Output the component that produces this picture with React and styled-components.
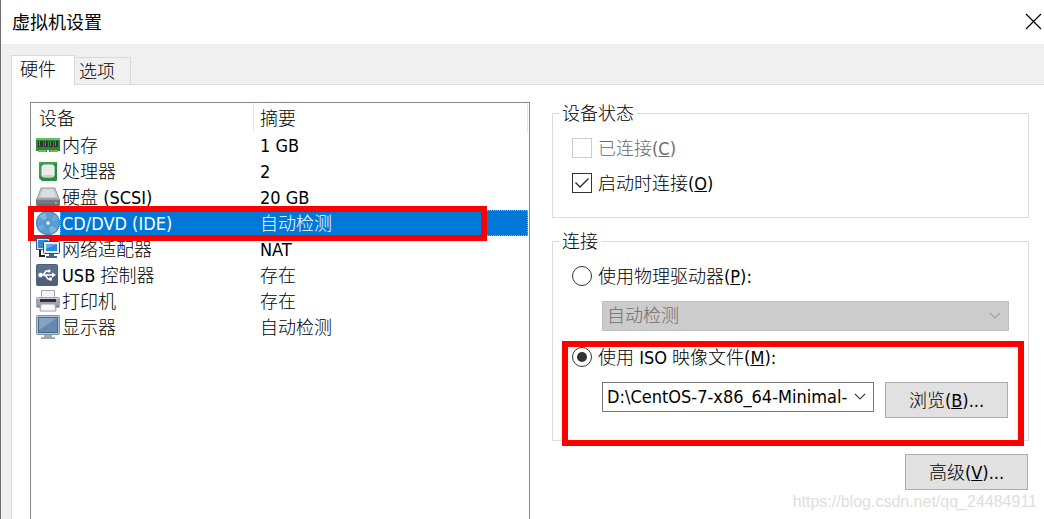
import React from "react";
import styled, { createGlobalStyle, css } from "styled-components";

const Global = createGlobalStyle`
  *, *::before, *::after { box-sizing: border-box; }
  body { margin: 0; background: #fff; }
  body, button, input, select {
    font-family: "DejaVu Sans Condensed", "Noto Sans CJK SC", sans-serif;
    font-size: 18px;
    font-weight: 300;
    line-height: 24px;
    color: #000;
  }
`;

const Dialog = styled.div`
  position: relative;
  display: flex;
  flex-direction: column;
  min-height: 100vh;
  background: #f0f0f0;
  border-left: 1px solid #6e6e72;
  overflow: hidden;
`;

const TitleBar = styled.header`
  display: flex;
  align-items: center;
  justify-content: space-between;
  height: 44px;
  padding: 0 2px 2px 11px;
  background: #fff;
`;

const Title = styled.h1`
  margin: 0;
  font: 400 18px/24px "Noto Sans CJK SC", sans-serif;
`;

const CloseButton = styled.button`
  display: flex;
  padding: 0;
  border: 0;
  background: none;
`;

const Body = styled.main`
  flex: 1;
  display: flex;
  flex-direction: column;
  padding: 11px 0 0 10px;
`;

const Tabs = styled.div`
  display: flex;
  align-items: flex-end;
`;

const Tab = styled.button`
  height: ${(p) => (p.$active ? 30 : 28)}px;
  width: ${(p) => (p.$active ? 64 : 56)}px;
  padding: 0 0 ${(p) => (p.$active ? 2 : 0)}px ${(p) => (p.$active ? 8 : 4)}px;
  text-align: left;
  border: 1px solid #d9d9d9;
  border-bottom: 0;
  background: ${(p) => (p.$active ? "#fff" : "#f0f0f0")};
  ${(p) => (p.$active ? "z-index: 1;" : "border-left: 0;")}
`;

const Panel = styled.section`
  flex: 1;
  display: grid;
  grid-template-columns: 500fr 477fr;
  gap: 22px;
  margin-top: -1px;
  padding: 17px 15px 0 18px;
  border: 1px solid #d9d9d9;
  border-width: 1px 0 0 1px;
  background: #fff;
`;

const ListBox = styled.div`
  padding-right: 1px;
  border: 1px solid #828790;
  border-bottom: 0;
`;

const DeviceTable = styled.table`
  width: 100%;
  table-layout: fixed;
  border-collapse: separate;
  border-spacing: 0;
`;

const HeadCell = styled.th`
  width: ${(p) => p.$width || "auto"};
  height: 29px;
  padding: 2px 0 0 ${(p) => (p.$width ? 8 : 6)}px;
  border-right: 1px solid #e5e5e5;
  text-align: left;
  font-weight: 300;
`;

const Row = styled.tr`
  position: relative;
  ${(p) =>
    p.$selected &&
    css`
      color: #fff;
      background: linear-gradient(to right, #fff 29px, #0078d7 29px);
    `}
`;

const Cell = styled.td`
  height: 26px;
  padding: ${(p) => (p.$name ? "0 0 0 5px" : "2px 0 0 6px")};
  white-space: nowrap;
`;

const Device = styled.div`
  display: flex;
  align-items: center;
  gap: 2px;
  height: 26px;
`;

const Caption = styled.span`
  padding-top: 2px;
`;

const FocusRing = styled.span`
  position: absolute;
  inset: 0 0 0 29px;
  border: 1px dotted #ff9a3c;
  pointer-events: none;
`;

const Marker = styled.span`
  position: absolute;
  inset: ${(p) => p.$inset};
  border: 6px solid #f00;
  pointer-events: none;
`;

const Settings = styled.div`
  display: flex;
  flex-direction: column;
  gap: 13px;
  padding-top: 1px;
`;

const Group = styled.fieldset`
  min-width: 0;
  margin: 0;
  padding: 0;
  border: 1px solid #dcdcdc;
`;

const Legend = styled.legend`
  margin-left: 6px;
  padding: 0 3px;
  line-height: 21px;
`;

const Options = styled.div`
  display: flex;
  flex-direction: column;
  gap: ${(p) => (p.$loose ? 14 : 11)}px;
  padding: 12px 19px 22px;
`;

const Choice = styled.div`
  position: relative;
  display: flex;
  flex-direction: column;
  gap: 13px;
`;

const OptionLabel = styled.label`
  display: flex;
  align-items: center;
  gap: 6px;
  height: 24px;
  white-space: nowrap;
  color: ${(p) => (p.$disabled ? "#6d6d6d" : "#000")};
`;

const Check = styled.input`
  appearance: none;
  display: grid;
  place-items: center;
  width: 20px;
  height: 20px;
  margin: 0;
  border: 1px solid #333;
  background: #fff;
  &:disabled { border-color: #ccc; }
  &:checked::after {
    content: "";
    width: 14px;
    height: 10px;
    background: #333;
    clip-path: polygon(0 5px, 1px 4px, 5px 8px, 13px 0, 14px 1px, 5px 10px);
  }
`;

const Radio = styled.input`
  appearance: none;
  display: grid;
  place-items: center;
  width: 20px;
  height: 20px;
  margin: 0;
  border: 1px solid #333;
  border-radius: 50%;
  background: #fff;
  &:checked::after {
    content: "";
    width: 10px;
    height: 10px;
    border-radius: 50%;
    background: #333;
  }
`;

const FieldLine = styled.div`
  display: flex;
  align-items: flex-start;
  gap: 10px;
  padding-left: 30px;
`;

const SelectBox = styled.div`
  flex: 1;
  min-width: 0;
  display: grid;
  align-items: center;
  & > * { grid-area: 1 / 1; }
  & > svg {
    justify-self: end;
    margin-right: 8px;
    pointer-events: none;
    color: ${(p) => (p.$disabled ? "#a0a0a0" : "#444")};
  }
`;

const Select = styled.select`
  appearance: none;
  width: 100%;
  height: 30px;
  padding: 0 26px 0 4px;
  border: 1px solid #7a7a7a;
  border-radius: 0;
  background: #fff;
  &:disabled {
    border-color: #bfbfbf;
    background: #ccc;
    color: #6d6d6d;
    opacity: 1;
  }
`;

const PushButton = styled.button`
  width: 123px;
  height: 36px;
  margin: 0 1px;
  padding: 2px 0 0;
  border: 1px solid #adadad;
  background: #e1e1e1;
`;

const Actions = styled.div`
  display: flex;
  justify-content: flex-end;
`;

const Watermark = styled.div`
  position: absolute;
  right: 7px;
  bottom: 5px;
  font: 16px/24px "Liberation Sans", sans-serif;
  color: #dedede;
`;

const Icon = ({ children }) => (
  <svg width="24" height="24" viewBox="0 0 24 24" aria-hidden="true">{children}</svg>
);

const MemoryIcon = () => (
  <Icon>
    <path d="M0 5h24v13h-2v1H13v-2h-2v2H2v-1H0z" fill="#278a36" />
    <path d="M0 5h24v2H0z" fill="#69bd62" />
    <path d="M2 8h5v6H2zM8 8h4v6H8zM13 8h4v6h-4zM18 8h4v6h-4z" fill="#333" />
    <path d="M3 8h1v5H3zM9 8h1v5H9zM14 8h1v5h-1zM19 8h1v5h-1z" fill="#777" />
    <path d="M3 17v2M5 17v2M7 17v2M9 17v2M15 17v2M17 17v2M19 17v2M21 17v2" stroke="#d9d95b" />
  </Icon>
);
const CpuIcon = () => (
  <Icon>
    <path d="M3 4q0-1 1-1h16q1 0 1 1v17q0 1-1 1H6l-3-3z" fill="#278f3f" />
    <path d="M4 18V4h16" fill="none" stroke="#55b366" />
    <rect x="6" y="6" width="12" height="12" rx="2" fill="#ebebeb" stroke="#fff" />
    <path d="M7 16h10v2H7z" fill="#cdd1cd" />
  </Icon>
);
const DiskIcon = () => (
  <Icon>
    <path d="M5 3h14l4 11H1z" fill="#c3c7ce" stroke="#9297a1" />
    <path d="M7 4h10l3 8H4z" fill="#dadde2" />
    <rect x="0" y="13" width="24" height="9" rx="2" fill="#757983" />
    <path d="M1 14h22" stroke="#c5c8ce" />
    <path d="M2 20h20" stroke="#5b5f69" />
    <circle cx="20" cy="18" r="1" fill="#7be04f" />
  </Icon>
);
const DiscIcon = () => (
  <Icon>
    <circle cx="12" cy="12" r="12" fill="#5b9fd2" />
    <path d="M12 12L2 5A12 12 0 0 1 9 0zM12 12l10 7a12 12 0 0 1-7 5z" fill="#80b7df" />
    <path d="M12 12L20 3a12 12 0 0 1 3 5zM12 12L4 21a12 12 0 0 1-3-5z" fill="#6cabd9" />
    <circle cx="12" cy="12" r="11.5" fill="none" stroke="#4384b8" />
    <circle cx="12" cy="12" r="4" fill="#68a7d6" stroke="#4a8cc0" />
    <circle cx="12" cy="12" r="1.5" fill="#f4f8fb" />
  </Icon>
);
const NetworkIcon = () => (
  <Icon>
    <rect x="0.5" y="1.5" width="13" height="11" fill="#d6e7f5" stroke="#345b82" />
    <rect x="2" y="3" width="10" height="8" fill="#3388d1" />
    <path d="M4 13v6h5" fill="none" stroke="#222" strokeWidth="2" />
    <rect x="7.5" y="4.500" width="16" height="12" rx="1" fill="#e3f0fa" stroke="#24517d" />
    <rect x="10" y="7" width="11" height="7" fill="#2d86d6" />
    <path d="M10 7h11l-11 5z" fill="#62abe8" />
    <path d="M13 17h5v2h3v2H10v-2h3z" fill="#4a6684" />
  </Icon>
);
const UsbIcon = () => (
  <Icon>
    <rect x="0" y="1" width="22" height="22" rx="2" fill="#4c6079" />
    <path d="M1 2h20v9L1 16z" fill="#5c7089" />
    <path d="M4 12h13M7 12l3-4h3M9 12l3 4h3" fill="none" stroke="#fff" strokeWidth="1.5" />
    <circle cx="4.5" cy="12" r="2.2" fill="#fff" />
    <path d="M16 9.500l4 2.500-4 2.500z" fill="#fff" />
    <circle cx="13" cy="8" r="1.5" fill="#fff" />
    <path d="M13 14.500h3v3h-3z" fill="#fff" />
  </Icon>
);
const PrinterIcon = () => (
  <Icon>
    <path d="M5.500 1.500h13v9h-13z" fill="#f5f5f8" stroke="#a5a5af" />
    <rect x="0" y="8" width="24" height="11" rx="2" fill="#a3a3ae" />
    <path d="M1 9.500h22" stroke="#d0d0d7" />
    <path d="M4 10h16v3H4z" fill="#2e2e38" />
    <path d="M1 17h22" stroke="#777784" />
    <path d="M5 15h14l1 7H4z" fill="#f7f7fb" stroke="#9e9eaa" />
  </Icon>
);
const MonitorIcon = () => (
  <Icon>
    <rect x="0.5" y="0.5" width="23" height="19" rx="1" fill="#b4c4d3" stroke="#8195a8" />
    <rect x="2.5" y="2.5" width="19" height="15" fill="#6489ae" stroke="#48698b" />
    <path d="M3 3h18L3 15z" fill="#82a3c3" />
    <path d="M8 20h8v2h3v2H5v-2h3z" fill="#9aa8b5" />
  </Icon>
);

const Chevron = () => (
  <svg width="12" height="8" viewBox="0 0 12 8" aria-hidden="true">
    <path d="M1 1l5 5 5-5" fill="none" stroke="currentColor" strokeWidth="1.2" />
  </svg>
);

const devices = [
  [MemoryIcon, "内存", "1 GB"],
  [CpuIcon, "处理器", "2"],
  [DiskIcon, "硬盘 (SCSI)", "20 GB"],
  [DiscIcon, "CD/DVD (IDE)", "自动检测", true],
  [NetworkIcon, "网络适配器", "NAT"],
  [UsbIcon, "USB 控制器", "存在"],
  [PrinterIcon, "打印机", "存在"],
  [MonitorIcon, "显示器", "自动检测"],
];

export default function App() {
  return (
    <Dialog>
      <Global />
      <TitleBar>
        <Title>虚拟机设置</Title>
        <CloseButton aria-label="关闭">
          <svg width="17" height="17" viewBox="0 0 17 17">
            <path d="M1 1l15 15M16 1L1 16" stroke="#000" strokeWidth="1.2" />
          </svg>
        </CloseButton>
      </TitleBar>
      <Body>
        <Tabs role="tablist">
          <Tab role="tab" aria-selected="true" $active>硬件</Tab>
          <Tab role="tab" aria-selected="false">选项</Tab>
        </Tabs>
        <Panel role="tabpanel">
          <ListBox>
            <DeviceTable>
              <thead>
                <tr>
                  <HeadCell $width="223px">设备</HeadCell>
                  <HeadCell>摘要</HeadCell>
                </tr>
              </thead>
              <tbody>
                {devices.map(([Glyph, name, summary, selected]) => (
                  <Row key={name} $selected={selected}>
                    <Cell $name>
                      <Device><Glyph /><Caption>{name}</Caption></Device>
                      {selected && <FocusRing />}
                      {selected && <Marker $inset="-4px 41px -5px -3px" />}
                    </Cell>
                    <Cell>{summary}</Cell>
                  </Row>
                ))}
              </tbody>
            </DeviceTable>
          </ListBox>
          <Settings>
            <Group>
              <Legend>设备状态</Legend>
              <Options>
                <OptionLabel $disabled>
                  <Check type="checkbox" disabled />
                  <Caption>已连接(<u>C</u>)</Caption>
                </OptionLabel>
                <OptionLabel>
                  <Check type="checkbox" defaultChecked />
                  <Caption>启动时连接(<u>O</u>)</Caption>
                </OptionLabel>
              </Options>
            </Group>
            <Group>
              <Legend>连接</Legend>
              <Options $loose>
                <Choice>
                  <OptionLabel>
                    <Radio type="radio" name="source" />
                    <Caption>使用物理驱动器(<u>P</u>):</Caption>
                  </OptionLabel>
                  <FieldLine>
                    <SelectBox $disabled>
                      <Select disabled aria-label="物理驱动器"><option>自动检测</option></Select>
                      <Chevron />
                    </SelectBox>
                  </FieldLine>
                </Choice>
                <Choice>
                  <OptionLabel>
                    <Radio type="radio" name="source" defaultChecked />
                    <Caption>使用 ISO 映像文件(<u>M</u>):</Caption>
                  </OptionLabel>
                  <FieldLine>
                    <SelectBox>
                      <Select aria-label="ISO 映像文件"><option>D:\CentOS-7-x86_64-Minimal-</option></Select>
                      <Chevron />
                    </SelectBox>
                    <PushButton>浏览(<u>B</u>)...</PushButton>
                  </FieldLine>
                  <Marker $inset="-4px -15px -28px -10px" />
                </Choice>
              </Options>
            </Group>
            <Actions>
              <PushButton>高级(<u>V</u>)...</PushButton>
            </Actions>
          </Settings>
        </Panel>
      </Body>
      <Watermark>https://blog.csdn.net/qq_24484911</Watermark>
    </Dialog>
  );
}
